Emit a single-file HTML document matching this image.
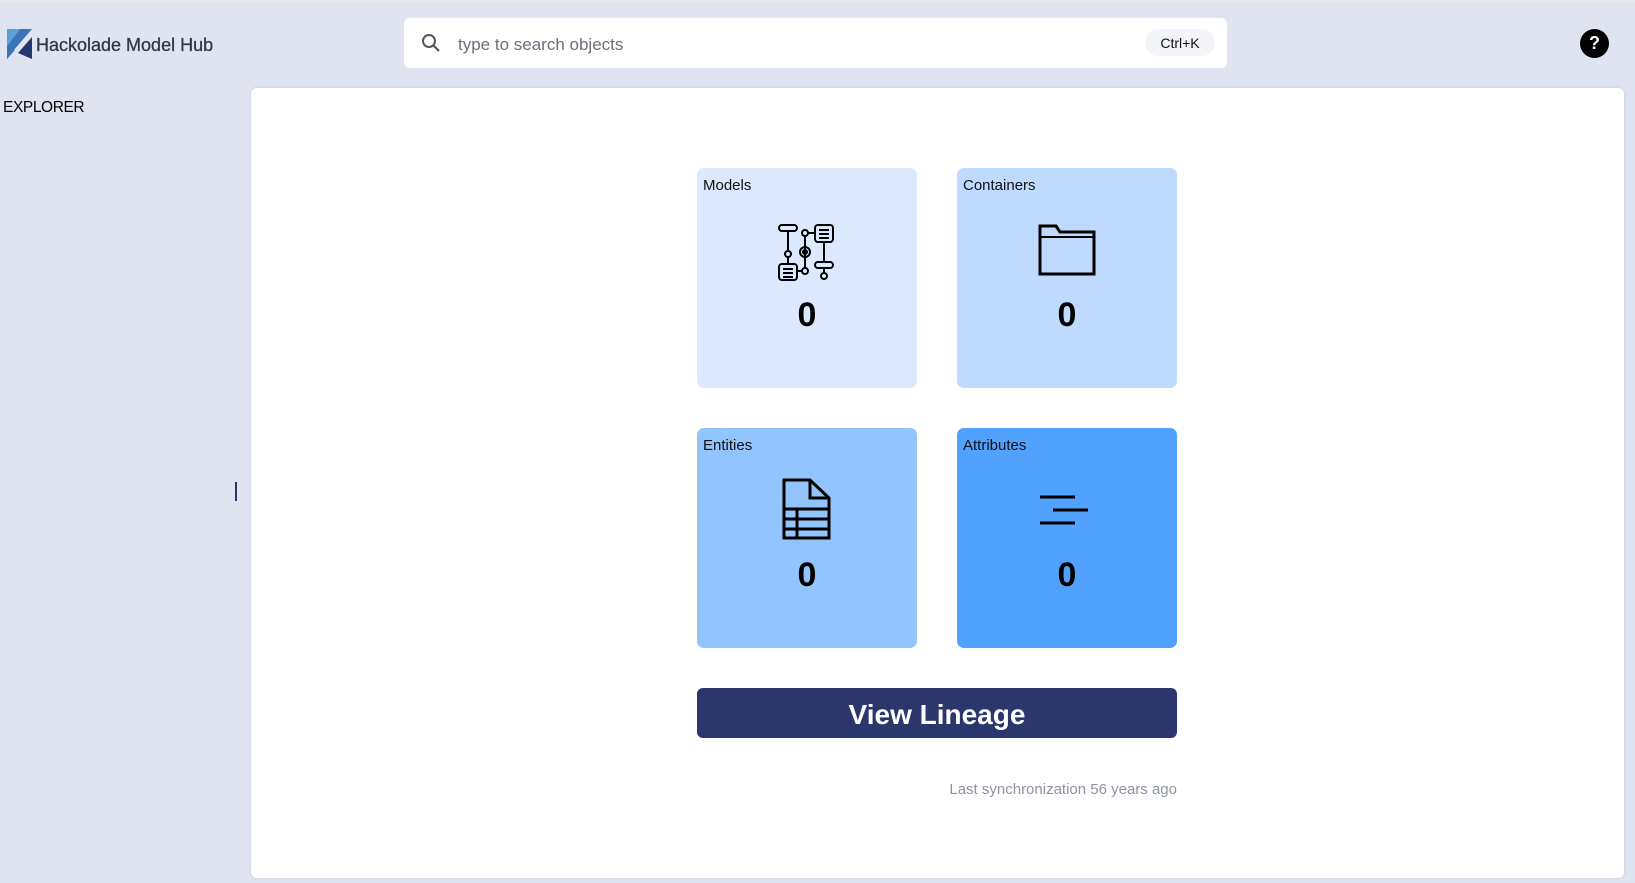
<!DOCTYPE html>
<html><head><meta charset="utf-8"><style>
*{box-sizing:border-box;margin:0;padding:0}
body{width:1635px;height:883px;background:#e0e4f0;font-family:"Liberation Sans",sans-serif;position:relative;overflow:hidden}
.abs{position:absolute}
.title{left:36px;top:35px;font-size:18px;color:#33364a;-webkit-text-stroke:0.3px #33364a}
.search{left:404px;top:18px;width:823px;height:50px;background:#fff;border-radius:6px}
.search .ph{position:absolute;left:54px;top:17px;font-size:17px;color:#6b6f7a}
.kbd{position:absolute;right:12px;top:11px;height:27px;width:70px;background:#f3f4f7;border-radius:14px;font-size:14px;color:#111;text-align:center;line-height:29px}
.help{left:1580px;top:29px;width:29px;height:29px;border-radius:50%;background:#000;color:#fff;font-weight:bold;font-size:18px;text-align:center;line-height:29px}
.explorer{left:3px;top:99px;font-size:15.5px;color:#000;letter-spacing:-0.4px}
.panel{left:251px;top:88px;width:1373px;height:790px;background:#fff;border-radius:6px;box-shadow:0 0 3px rgba(0,0,0,.12)}
.card{position:absolute;width:220px;height:220px;border-radius:7px}
.card .lbl{position:absolute;left:6px;top:9px;font-size:15px;color:#111}
.card .num{position:absolute;left:0;width:100%;top:128px;text-align:center;font-size:34px;font-weight:bold;color:#000}
.card svg{position:absolute;left:50%;transform:translateX(-50%)}
.btn{left:697px;top:688px;width:480px;height:50px;background:#2b366c;border-radius:6px;color:#fff;font-size:28px;font-weight:bold;text-align:center;line-height:54px}
.sync{left:800px;width:377px;top:781px;text-align:right;font-size:15px;color:#8e93a3}
</style></head><body>
<div class="abs" style="left:0;top:0;width:1635px;height:2px;background:#e8e8e8"></div>
<svg class="abs" style="left:7px;top:29px" width="25" height="30" viewBox="0 0 25 30">
<polygon points="0,0 13,0 0,17" fill="#5aa0d4"/>
<polygon points="13,0 25,0 6,22 0,30 0,17" fill="#3a74b8"/>
<polygon points="25,8 25,30 11,24" fill="#25356e"/>
<polygon points="0,17 0,30 8,21" fill="#3a74b8"/>
</svg>
<div class="abs title">Hackolade Model Hub</div>
<div class="abs search">
<svg style="position:absolute;left:17px;top:15px" width="20" height="20" viewBox="0 0 20 20"><circle cx="8" cy="8" r="6" fill="none" stroke="#555" stroke-width="2"/><line x1="12.5" y1="12.5" x2="18" y2="18" stroke="#555" stroke-width="2.2"/></svg>
<div class="ph">type to search objects</div>
<div class="kbd">Ctrl+K</div>
</div>
<div class="abs help">?</div>
<div class="abs explorer">EXPLORER</div>
<div class="abs" style="left:235px;top:482px;width:2px;height:19px;background:#2b366c"></div>
<div class="abs panel"></div>

<div class="card" style="left:697px;top:168px;background:#dbe8fe">
<div class="lbl">Models</div>
<svg style="top:56px" width="60" height="58" viewBox="0 0 60 58" fill="none" stroke="#000" stroke-width="2">
<rect x="2" y="1" width="18" height="6" rx="3"/><line x1="11" y1="7" x2="11" y2="27"/><circle cx="11" cy="30" r="3"/><line x1="11" y1="33" x2="11" y2="40"/>
<rect x="2" y="40" width="18" height="16" rx="3"/><line x1="6" y1="45" x2="16" y2="45"/><line x1="6" y1="49" x2="16" y2="49"/><line x1="6" y1="53" x2="16" y2="53"/>
<line x1="20" y1="47" x2="25" y2="47"/><circle cx="28" cy="47" r="3"/><line x1="28" y1="12" x2="28" y2="44"/><circle cx="28" cy="9" r="3"/>
<circle cx="28" cy="28" r="5"/><circle cx="28" cy="28" r="2"/>
<line x1="31" y1="9" x2="38" y2="9"/><rect x="38" y="1" width="18" height="17" rx="3"/><line x1="42" y1="6" x2="52" y2="6"/><line x1="42" y1="10" x2="52" y2="10"/><line x1="42" y1="14" x2="52" y2="14"/>
<line x1="47" y1="18" x2="47" y2="38"/><rect x="38" y="38" width="18" height="6" rx="3"/><line x1="47" y1="44" x2="47" y2="49"/><circle cx="47" cy="52" r="3"/>
</svg>
<div class="num">0</div></div>

<div class="card" style="left:957px;top:168px;background:#bedafe">
<div class="lbl">Containers</div>
<svg style="top:56px" width="58" height="52" viewBox="0 0 58 52" fill="none" stroke="#000" stroke-width="3">
<path d="M2 2 H18 L22 8 H56 V50 H2 Z"/><line x1="2" y1="13" x2="56" y2="13" stroke-width="2"/>
</svg>
<div class="num">0</div></div>

<div class="card" style="left:697px;top:428px;background:#92c4fd">
<div class="lbl">Entities</div>
<svg style="top:50px" width="50" height="62" viewBox="0 0 50 62" fill="none" stroke="#000" stroke-width="3">
<path d="M2 2 H28 L47 20 V60 H2 Z"/><path d="M28 2 V20 H47"/>
<line x1="2" y1="31" x2="47" y2="31"/><line x1="2" y1="41" x2="47" y2="41"/><line x1="2" y1="51" x2="47" y2="51"/><line x1="15" y1="31" x2="15" y2="60"/>
</svg>
<div class="num">0</div></div>

<div class="card" style="left:957px;top:428px;background:#51a2fe">
<div class="lbl">Attributes</div>
<svg style="top:64px;left:81px;transform:none" width="52" height="34" viewBox="0 0 52 34" stroke="#000" stroke-width="3">
<line x1="2" y1="5" x2="37" y2="5"/><line x1="15" y1="18" x2="50" y2="18"/><line x1="2" y1="31" x2="37" y2="31"/>
</svg>
<div class="num">0</div></div>

<div class="abs btn">View Lineage</div>
<div class="abs sync">Last synchronization 56 years ago</div>
</body></html>
